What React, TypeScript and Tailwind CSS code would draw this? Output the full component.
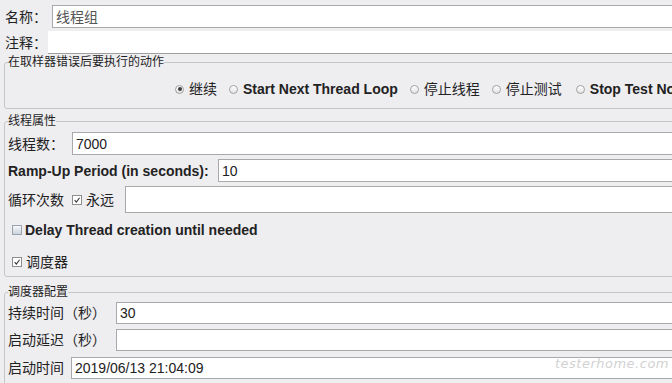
import React from "react";

function Radio({ checked }: { checked?: boolean }) {
  return (
    <span className="inline-flex items-center justify-center w-[9px] h-[9px] rounded-full border border-[#a2a2a2] bg-gradient-to-b from-white to-[#e2e2e2] shrink-0">
      {checked && <span className="w-[4px] h-[4px] rounded-full bg-[#3c3c3c]" />}
    </span>
  );
}

function Check({ checked }: { checked?: boolean }) {
  return (
    <span
      className={
        checked
          ? "inline-flex items-center justify-center w-[10px] h-[10px] border border-[#8e8e8e] bg-white shrink-0"
          : "inline-flex items-center justify-center w-[10px] h-[10px] border border-[#9aa3ae] bg-gradient-to-b from-[#f6f8fb] to-[#ccd4de] shrink-0"
      }
    >
      {checked && (
        <svg viewBox="0 0 10 10" className="w-[8px] h-[8px]">
          <path d="M2 5.2 L4.2 7.6 L8.2 2.2" stroke="#333" strokeWidth="1.3" fill="none" />
        </svg>
      )}
    </span>
  );
}

function Field({ value, className = "" }: { value?: string; className?: string }) {
  return (
    <div className={`flex-1 self-stretch bg-white border border-[#a9a9a9] pl-[3px] flex items-center text-[14px] text-[#222] ${className}`}>
      {value}
    </div>
  );
}

function Panel({ title, className = "", children }: { title: string; className?: string; children: React.ReactNode }) {
  return (
    <fieldset className={`ml-[4px] border border-[#c6c6c6] rounded-[3px] ${className}`}>
      <legend className="ml-[3px] text-[12px] leading-[16px] text-[#1e1e1e]">{title}</legend>
      {children}
    </fieldset>
  );
}

export default function App() {
  return (
    <div className="relative w-[672px] h-[383px] overflow-hidden bg-[#eeedf0] text-[#222] text-[14px] leading-[18px] font-['Liberation_Sans','Noto_Sans_CJK_SC',sans-serif]">
      <div className="w-[730px]">
        {/* name / comment */}
        <div className="flex items-center h-[23px] mt-[5px]">
          <span className="w-[52px] pl-[5px] shrink-0">名称：</span>
          <Field value="线程组" className="text-[#555] border-[#9c9c9c]" />
        </div>
        <div className="flex items-center h-[23px] mt-[3px]">
          <span className="w-[48px] pl-[5px] shrink-0">注释：</span>
          <div className="flex-1 self-stretch bg-white border-b border-[#a0a0a0]" />
        </div>

        {/* sampler error action */}
        <Panel title="在取样器错误后要执行的动作">
          <div className="h-[38px] flex items-center pl-[170px] whitespace-nowrap">
            <span className="flex items-center gap-[5px] mr-[12px]">
              <Radio checked />
              <span>继续</span>
            </span>
            <span className="flex items-center gap-[5px] mr-[12px]">
              <Radio />
              <span className="font-bold">Start Next Thread Loop</span>
            </span>
            <span className="flex items-center gap-[5px] mr-[12px]">
              <Radio />
              <span>停止线程</span>
            </span>
            <span className="flex items-center gap-[5px] mr-[14px]">
              <Radio />
              <span>停止测试</span>
            </span>
            <span className="flex items-center gap-[5px]">
              <Radio />
              <span className="font-bold">Stop Test Now</span>
            </span>
          </div>
        </Panel>

        {/* thread properties */}
        <Panel title="线程属性" className="mt-[4px]">
          <div className="flex items-center h-[23px] mt-[3px]">
            <span className="w-[67px] pl-[3px] shrink-0">线程数：</span>
            <Field value="7000" />
          </div>
          <div className="flex items-center h-[23px] mt-[4px]">
            <span className="w-[213px] pl-[3px] shrink-0 font-bold">Ramp-Up Period (in seconds):</span>
            <Field value="10" />
          </div>
          <div className="flex items-center h-[27px] mt-[4px]">
            <div className="w-[120px] pl-[3px] shrink-0 flex items-center">
              <span>循环次数</span>
              <span className="ml-[8px] mr-[4px] flex"><Check checked /></span>
              <span>永远</span>
            </div>
            <Field />
          </div>
          <div className="flex items-center h-[34px] pl-[7px] gap-[3px]">
            <Check />
            <span className="font-bold">Delay Thread creation until needed</span>
          </div>
          <div className="flex items-center h-[29px] pl-[7px] gap-[4px]">
            <Check checked />
            <span>调度器</span>
          </div>
        </Panel>

        {/* scheduler config */}
        <Panel title="调度器配置" className="mt-[7px]">
          <div className="flex items-center h-[22px] mt-[2px]">
            <span className="w-[111px] pl-[3px] shrink-0">持续时间（秒）</span>
            <Field value="30" />
          </div>
          <div className="flex items-center h-[22px] mt-[5px]">
            <span className="w-[111px] pl-[3px] shrink-0">启动延迟（秒）</span>
            <Field />
          </div>
          <div className="flex items-center h-[22px] mt-[6px]">
            <span className="w-[66px] pl-[3px] shrink-0">启动时间</span>
            <Field value="2019/06/13 21:04:09" />
          </div>
          <div className="h-[20px]" />
        </Panel>
      </div>

      {/* watermark */}
      <span className="absolute right-[3px] bottom-[10px] text-[13px] italic font-light text-[#d2d2d2] font-['DejaVu_Sans',sans-serif] tracking-[0.5px]">
        testerhome.com
      </span>
    </div>
  );
}
